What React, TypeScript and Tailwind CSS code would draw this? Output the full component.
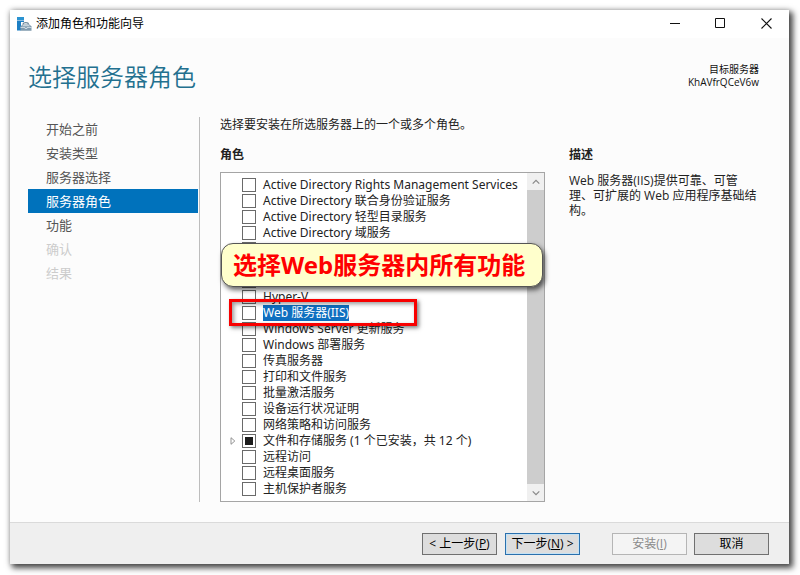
// =====================================================
// ADD ROLES AND FEATURES WIZARD
// Server roles step
// =====================================================

import { useEffect, useRef, useState } from 'react';

const steps = [
  { label: '开始之前', state: 'done' },
  { label: '安装类型', state: 'done' },
  { label: '服务器选择', state: 'done' },
  { label: '服务器角色', state: 'current' },
  { label: '功能', state: 'next' },
  { label: '确认', state: 'disabled' },
  { label: '结果', state: 'disabled' },
];

interface Role {
  name: string;
  partial?: boolean;
}

const roles: Role[] = [
  { name: 'Active Directory Rights Management Services' },
  { name: 'Active Directory 联合身份验证服务' },
  { name: 'Active Directory 轻型目录服务' },
  { name: 'Active Directory 域服务' },
  { name: '' },
  { name: '' },
  { name: '' },
  { name: 'Hyper-V' },
  { name: 'Web 服务器(IIS)' },
  { name: 'Windows Server 更新服务' },
  { name: 'Windows 部署服务' },
  { name: '传真服务器' },
  { name: '打印和文件服务' },
  { name: '批量激活服务' },
  { name: '设备运行状况证明' },
  { name: '网络策略和访问服务' },
  { name: '文件和存储服务 (1 个已安装，共 12 个)', partial: true },
  { name: '远程访问' },
  { name: '远程桌面服务' },
  { name: '主机保护者服务' },
];

function WizardIcon() {
  return (
    <svg width="16" height="16" viewBox="0 0 16 16" aria-hidden="true">
      <path d="M1 1h7v3H1z" fill="#2b93d1" />
      <path d="M1 4.500h7V6H5v8.500H1z" fill="#1c7fc4" />
      <path d="M7 8.500C7 6 12.500 6 12.500 8.500" fill="none" stroke="#6d8799" strokeWidth="1.200" />
      <path d="M4.500 10.500l2-2h7l2 2v4.200h-11z" fill="#7f9aad" />
      <path d="M6 10.200l1-1h6l1 1z" fill="#dbe5eb" />
      <path d="M4.500 11.500h4.500v1h2v-1h4.500" fill="none" stroke="#e6eef3" strokeWidth="0.700" />
    </svg>
  );
}

function TitleBar() {
  return (
    <header className="flex h-7 items-center bg-white pl-[6px]">
      <WizardIcon />
      <span className="ml-1 flex-1 text-xs text-black">添加角色和功能向导</span>
      <button type="button" aria-label="最小化" className="flex h-7 w-[45px] items-center justify-center pb-[2px]">
        <svg width="11" height="11" viewBox="0 0 11 11">
          <path d="M0 5.500h10" stroke="#111" />
        </svg>
      </button>
      <button type="button" aria-label="最大化" className="flex h-7 w-[45px] items-center justify-center pb-[2px]">
        <svg width="11" height="11" viewBox="0 0 11 11">
          <path d="M.5.500h9v9h-9z" fill="none" stroke="#111" />
        </svg>
      </button>
      <button type="button" aria-label="关闭" className="flex h-7 w-[46px] items-center justify-center pb-[2px]">
        <svg width="11" height="11" viewBox="0 0 11 11">
          <path d="M.5.500l10 10M10.500.500l-10 10" stroke="#111" strokeWidth="1.100" />
        </svg>
      </button>
    </header>
  );
}

interface RoleRowProps {
  role: Role;
  isSelected: boolean;
  onSelect: () => void;
}

function RoleRow({ role, isSelected, onSelect }: RoleRowProps) {
  const boxRef = useRef<HTMLInputElement>(null);

  useEffect(() => {
    if (boxRef.current) boxRef.current.indeterminate = Boolean(role.partial);
  }, [role.partial]);

  return (
    <li className="flex h-4 items-center">
      <span className="flex w-[21px] justify-end pr-[6px]">
        {role.partial && (
          <svg width="6" height="8" viewBox="0 0 6 8" aria-hidden="true">
            <path d="M1 .7v6.600L4.800 4z" fill="#fff" stroke="#888" strokeWidth="0.900" />
          </svg>
        )}
      </span>
      <label className="flex items-center gap-[7px]" onClick={onSelect}>
        <input
          ref={boxRef}
          type="checkbox"
          className="size-[14px] appearance-none border border-[#6a6a6a] bg-white checked:bg-[#222] checked:shadow-[inset_0_0_0_2px_#fff] indeterminate:bg-[#1c1c1c] indeterminate:shadow-[inset_0_0_0_2px_#fff]"
        />
        <span className={`whitespace-nowrap leading-4 ${isSelected ? 'bg-[#0f6fc0] text-white' : 'text-[#222]'}`}>
          {role.name}
        </span>
      </label>
    </li>
  );
}

function ScrollBar() {
  return (
    <div className="flex w-[17px] shrink-0 flex-col bg-[#cdcdcd]">
      <button type="button" aria-label="向上滚动" className="flex h-[17px] items-center justify-center bg-[#f0f0f0]">
        <svg width="8" height="6" viewBox="0 0 8 6">
          <path d="M.7 4.700L4 1.300l3.300 3.400" fill="none" stroke="#888" strokeWidth="1.200" />
        </svg>
      </button>
      <div className="flex-1" />
      <button type="button" aria-label="向下滚动" className="flex h-[17px] items-center justify-center bg-[#f0f0f0]">
        <svg width="8" height="6" viewBox="0 0 8 6">
          <path d="M.7 1.300L4 4.700l3.300-3.400" fill="none" stroke="#888" strokeWidth="1.200" />
        </svg>
      </button>
    </div>
  );
}

export default function App() {
  const [selected, setSelected] = useState('Web 服务器(IIS)');

  return (
    <div className="flex min-h-screen bg-white pt-[10px] pr-[11px] pb-[11px] pl-[10px] font-['Open_Sans','Noto_Sans_CJK_SC',sans-serif] text-xs text-[#222]">
      <div className="flex flex-1 flex-col bg-[#fcfcfc] shadow-[3px_3px_6px_1px_rgba(0,0,0,0.7),0_0_6px_rgba(0,0,0,0.2)]">
        <TitleBar />

        <main className="flex-1 pr-[30px] pl-[18px]">
          <div className="flex h-[79px] items-start justify-between pt-[22px]">
            <h1 className="font-['Noto_Sans_CJK_SC',sans-serif] text-2xl leading-8 font-[350] text-[#23708f]">
              选择服务器角色
            </h1>
            <div className="pt-[3px] text-right text-[10px] leading-[13px] text-[#111]">
              <p>目标服务器</p>
              <p>KhAVfrQCeV6w</p>
            </div>
          </div>

          <div className="flex">
            <nav className="w-[172px] shrink-0 border-r border-[#bdbdbd] pr-px">
              <ul>
                {steps.map(({ label, state }) => (
                  <li key={label}>
                    <a
                      href="#"
                      aria-current={state === 'current' ? 'step' : undefined}
                      className={`block h-6 pl-[18px] text-[13px] leading-6 ${
                        state === 'current'
                          ? 'bg-[#0072bc] text-white'
                          : state === 'disabled'
                            ? 'text-[#cccccc]'
                            : 'text-[#555]'
                      }`}
                    >
                      {label}
                    </a>
                  </li>
                ))}
              </ul>
            </nav>

            <section className="ml-5 w-[325px] shrink-0">
              <p className="leading-4">选择要安装在所选服务器上的一个或多个角色。</p>
              <h2 className="mt-[14px] leading-4 font-bold">角色</h2>

              <div className="relative mt-[9px] flex border border-[#a5a5a5] bg-white font-['Noto_Sans','Noto_Sans_CJK_SC',sans-serif]">
                <ul className="min-w-0 flex-1 py-1">
                  {roles.map((role, index) => (
                    <RoleRow
                      key={index}
                      role={role}
                      isSelected={selected === role.name}
                      onSelect={() => setSelected(role.name)}
                    />
                  ))}
                </ul>
                <ScrollBar />

                {/* Annotations over the list */}
                <div className="pointer-events-none absolute top-[126px] left-2 h-[27px] w-[188px] border-3 border-[#f80000] shadow-[2px_2px_4px_rgba(0,0,0,0.5),inset_2px_2px_4px_rgba(0,0,0,0.4)]" />
                <div className="absolute top-[70px] left-0 flex h-11 w-[322px] items-center rounded-xl border border-[#555] bg-[#ffffcc] pl-[11px] text-2xl font-bold whitespace-nowrap text-[#ff0000] shadow-[2px_3px_5px_rgba(0,0,0,0.6)]">
                  选择Web服务器内所有功能
                </div>
              </div>
            </section>

            <section className="ml-6 min-w-0 flex-1">
              <h2 className="mt-[30px] leading-4 font-bold">描述</h2>
              <p className="mt-[10px] leading-[15px]">
                Web 服务器(IIS)提供可靠、可管理、可扩展的 Web 应用程序基础结构。
              </p>
            </section>
          </div>
        </main>

        <footer className="flex h-[42px] items-center justify-end border-t border-[#dadada] bg-[#efefef] pr-5 text-black">
          <button type="button" className="h-[22px] w-[75px] border border-[#707070] bg-[#dddddd]">
            &lt; 上一步(<u>P</u>)
          </button>
          <button type="button" className="ml-2 h-[22px] w-[75px] border border-[#2a70ad] bg-[#dddddd] shadow-[inset_0_0_0_1px_#c4e2f5]">
            下一步(<u>N</u>) &gt;
          </button>
          <button type="button" disabled className="ml-8 h-[22px] w-[75px] border border-[#b5b5b5] bg-[#f4f4f4] text-[#8a8a8a]">
            安装(<u>I</u>)
          </button>
          <button type="button" className="ml-[7px] h-[22px] w-[75px] border border-[#707070] bg-[#dddddd]">
            取消
          </button>
        </footer>
      </div>
    </div>
  );
}
